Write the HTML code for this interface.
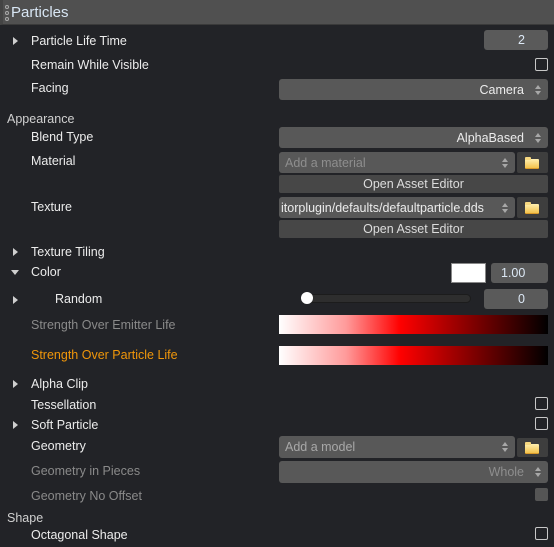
<!DOCTYPE html>
<html><head><meta charset="utf-8"><style>
*{margin:0;padding:0;box-sizing:border-box}
body{width:554px;height:547px;background:#222327;font-family:"Liberation Sans",sans-serif;font-size:12.5px;color:#e6e6e6;position:relative;overflow:hidden}
.a{position:absolute;white-space:nowrap}
.l{position:absolute;left:31px;height:16px;line-height:16px;white-space:nowrap;color:#ececec;margin-top:1px}
.g{color:#8a8a8a}
.o{color:#f0960a}
.sec{position:absolute;left:7px;height:16px;line-height:16px;color:#d0d0d0;margin-top:1px}
.tri{position:absolute;left:13px;width:0;height:0;border-top:4px solid transparent;border-bottom:4px solid transparent;border-left:5px solid #cfcfcf}
.down{position:absolute;left:11px;width:0;height:0;border-left:4px solid transparent;border-right:4px solid transparent;border-top:5px solid #cfcfcf}
.sel{position:absolute;background:#585858;border-radius:3px;color:#ececec;padding:1px 24px 0 6px;overflow:hidden;white-space:nowrap}
.sel.r{text-align:right}
.sel::after{content:"";position:absolute;right:7px;top:50%;margin-top:-5px;width:0;height:0;border-left:3px solid transparent;border-right:3px solid transparent;border-bottom:4px solid #a8a8a8}
.sel::before{content:"";position:absolute;right:7px;top:50%;margin-top:1px;width:0;height:0;border-left:3px solid transparent;border-right:3px solid transparent;border-top:4px solid #a8a8a8}
.btn{position:absolute;left:279px;width:269px;height:18px;background:#474747;border-radius:2px;text-align:center;line-height:19px;color:#dcdcdc}
.fb{position:absolute;left:517px;width:31px;background:#3e3e3e;border-radius:2px}
.fb i{position:absolute;left:8px;top:50%;margin-top:-4px;width:14px;height:10px;background:linear-gradient(#fff0b0,#f3c34c);border-radius:1px;border-bottom:1px solid #d99a2a}
.fb i::before{content:"";position:absolute;left:0;top:-2px;width:6px;height:3px;background:#f7d880;border-radius:1px 1px 0 0}
.cb{position:absolute;left:535px;width:13px;height:13px;border:1px solid #c8c8c8;border-radius:2px}
.num{position:absolute;background:#5a5a5a;border-radius:3px;color:#dce8f5;line-height:21px;text-align:right;padding-right:23px}
.grad{position:absolute;left:279px;width:269px;height:19px;background:linear-gradient(to right,#fff 0%,#ff9a9a 25%,#ff0000 45%,#a00000 65%,#000 100%)}
</style></head><body>
<div class="a" style="left:0;top:0;width:554px;height:25px;background:#505050;border-bottom:1px solid #3a3a3a;border-left:3px solid #444"></div>
<div class="a" style="left:5px;top:5px;width:4px;height:4px;border:1px solid #aaa;border-radius:50%"></div>
<div class="a" style="left:5px;top:11px;width:4px;height:4px;border:1px solid #aaa;border-radius:50%"></div>
<div class="a" style="left:5px;top:17px;width:4px;height:4px;border:1px solid #aaa;border-radius:50%"></div>
<div class="a" style="left:11px;top:3px;font-size:15px;line-height:20px;color:#d8e6f4">Particles</div>

<div class="tri" style="top:37px"></div><div class="l" style="top:32px">Particle Life Time</div>
<div class="num" style="left:484px;top:30px;width:64px;height:20px">2</div>
<div class="l" style="top:56px">Remain While Visible</div><div class="cb" style="top:58px"></div>
<div class="l" style="top:79px">Facing</div>
<div class="sel r" style="left:279px;top:79px;width:269px;height:21px;line-height:20px">Camera</div>

<div class="sec" style="top:110px">Appearance</div>
<div class="l" style="top:128px">Blend Type</div>
<div class="sel r" style="left:279px;top:127px;width:269px;height:21px;line-height:20px">AlphaBased</div>
<div class="l" style="top:152px">Material</div>
<div class="sel" style="left:279px;top:152px;width:236px;height:21px;line-height:20px;color:#8e8e8e">Add a material</div>
<div class="fb" style="top:152px;height:21px"><i></i></div>
<div class="btn" style="top:175px">Open Asset Editor</div>
<div class="l" style="top:198px">Texture</div>
<div class="sel" style="left:279px;top:197px;width:236px;height:21px;line-height:20px;padding-left:2px">itorplugin/defaults/defaultparticle.dds</div>
<div class="fb" style="top:197px;height:21px"><i></i></div>
<div class="btn" style="top:220px">Open Asset Editor</div>

<div class="tri" style="top:248px"></div><div class="l" style="top:243px">Texture Tiling</div>
<div class="down" style="top:270px"></div><div class="l" style="top:263px">Color</div>
<div class="a" style="left:451px;top:263px;width:35px;height:20px;background:#fff;border:1px solid #888"></div>
<div class="num" style="left:491px;top:263px;width:57px;height:20px;text-align:left;padding-left:10px;padding-right:0">1.00</div>
<div class="tri" style="top:296px"></div><div class="l" style="left:55px;top:290px">Random</div>
<div class="a" style="left:302px;top:294px;width:169px;height:9px;background:#2e2e2e;border-radius:5px;border:1px solid #1c1c1c"></div>
<div class="a" style="left:301px;top:292px;width:12px;height:12px;background:#fff;border-radius:50%"></div>
<div class="num" style="left:484px;top:289px;width:64px;height:20px">0</div>
<div class="l g" style="top:316px">Strength Over Emitter Life</div>
<div class="grad" style="top:315px"></div>
<div class="l o" style="top:346px">Strength Over Particle Life</div>
<div class="grad" style="top:346px"></div>

<div class="tri" style="top:380px"></div><div class="l" style="top:375px">Alpha Clip</div>
<div class="l" style="top:396px">Tessellation</div><div class="cb" style="top:397px"></div>
<div class="tri" style="top:421px"></div><div class="l" style="top:416px">Soft Particle</div><div class="cb" style="top:417px"></div>
<div class="l" style="top:437px">Geometry</div>
<div class="sel" style="left:279px;top:436px;width:236px;height:22px;line-height:21px;color:#a8a8a8">Add a model</div>
<div class="fb" style="top:438px;height:19px"><i></i></div>
<div class="l g" style="top:462px">Geometry in Pieces</div>
<div class="sel r" style="left:279px;top:461px;width:269px;height:22px;line-height:21px;color:#8e8e8e">Whole</div>
<div class="l g" style="top:487px">Geometry No Offset</div>
<div class="a" style="left:535px;top:488px;width:13px;height:13px;background:#555;border-radius:2px"></div>
<div class="sec" style="top:509px">Shape</div>
<div class="l" style="top:526px">Octagonal Shape</div><div class="cb" style="top:527px"></div>
</body></html>
